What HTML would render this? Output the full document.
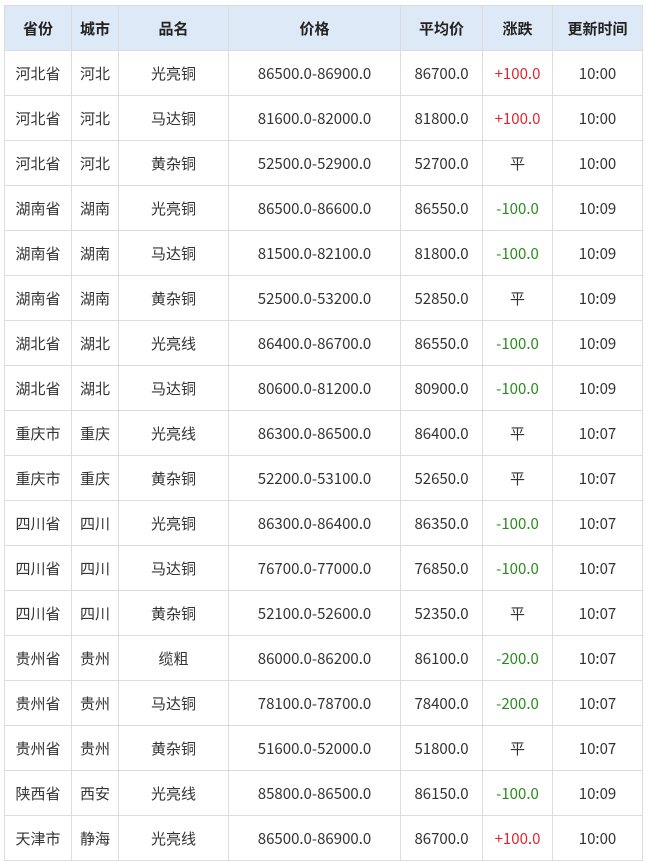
<!DOCTYPE html><html><head><meta charset="utf-8"><style>
body{margin:0;background:#fff;font-family:"Noto Sans CJK SC","Liberation Sans",sans-serif;}
table{position:absolute;left:4px;top:5px;border-collapse:collapse;table-layout:fixed;width:638px;}
td,th{border:1.5px solid #dcdcdc;height:42px;padding:2px 0 0 0;text-align:center;font-size:15px;line-height:20px;color:#333;}
th{background:#dde9f6;font-weight:bold;color:#222;}
.r{color:#e0262d}.g{color:#2a8a1e}
</style></head><body><table>
<colgroup><col style="width:67px"><col style="width:47px"><col style="width:110px"><col style="width:172px"><col style="width:82px"><col style="width:70px"><col style="width:90px"></colgroup>
<tr><th>省份</th><th>城市</th><th>品名</th><th>价格</th><th>平均价</th><th>涨跌</th><th>更新时间</th></tr>
<tr><td>河北省</td><td>河北</td><td>光亮铜</td><td>86500.0-86900.0</td><td>86700.0</td><td class="r">+100.0</td><td>10:00</td></tr>
<tr><td>河北省</td><td>河北</td><td>马达铜</td><td>81600.0-82000.0</td><td>81800.0</td><td class="r">+100.0</td><td>10:00</td></tr>
<tr><td>河北省</td><td>河北</td><td>黄杂铜</td><td>52500.0-52900.0</td><td>52700.0</td><td>平</td><td>10:00</td></tr>
<tr><td>湖南省</td><td>湖南</td><td>光亮铜</td><td>86500.0-86600.0</td><td>86550.0</td><td class="g">-100.0</td><td>10:09</td></tr>
<tr><td>湖南省</td><td>湖南</td><td>马达铜</td><td>81500.0-82100.0</td><td>81800.0</td><td class="g">-100.0</td><td>10:09</td></tr>
<tr><td>湖南省</td><td>湖南</td><td>黄杂铜</td><td>52500.0-53200.0</td><td>52850.0</td><td>平</td><td>10:09</td></tr>
<tr><td>湖北省</td><td>湖北</td><td>光亮线</td><td>86400.0-86700.0</td><td>86550.0</td><td class="g">-100.0</td><td>10:09</td></tr>
<tr><td>湖北省</td><td>湖北</td><td>马达铜</td><td>80600.0-81200.0</td><td>80900.0</td><td class="g">-100.0</td><td>10:09</td></tr>
<tr><td>重庆市</td><td>重庆</td><td>光亮线</td><td>86300.0-86500.0</td><td>86400.0</td><td>平</td><td>10:07</td></tr>
<tr><td>重庆市</td><td>重庆</td><td>黄杂铜</td><td>52200.0-53100.0</td><td>52650.0</td><td>平</td><td>10:07</td></tr>
<tr><td>四川省</td><td>四川</td><td>光亮铜</td><td>86300.0-86400.0</td><td>86350.0</td><td class="g">-100.0</td><td>10:07</td></tr>
<tr><td>四川省</td><td>四川</td><td>马达铜</td><td>76700.0-77000.0</td><td>76850.0</td><td class="g">-100.0</td><td>10:07</td></tr>
<tr><td>四川省</td><td>四川</td><td>黄杂铜</td><td>52100.0-52600.0</td><td>52350.0</td><td>平</td><td>10:07</td></tr>
<tr><td>贵州省</td><td>贵州</td><td>缆粗</td><td>86000.0-86200.0</td><td>86100.0</td><td class="g">-200.0</td><td>10:07</td></tr>
<tr><td>贵州省</td><td>贵州</td><td>马达铜</td><td>78100.0-78700.0</td><td>78400.0</td><td class="g">-200.0</td><td>10:07</td></tr>
<tr><td>贵州省</td><td>贵州</td><td>黄杂铜</td><td>51600.0-52000.0</td><td>51800.0</td><td>平</td><td>10:07</td></tr>
<tr><td>陕西省</td><td>西安</td><td>光亮线</td><td>85800.0-86500.0</td><td>86150.0</td><td class="g">-100.0</td><td>10:09</td></tr>
<tr><td>天津市</td><td>静海</td><td>光亮线</td><td>86500.0-86900.0</td><td>86700.0</td><td class="r">+100.0</td><td>10:00</td></tr>
</table></body></html>
